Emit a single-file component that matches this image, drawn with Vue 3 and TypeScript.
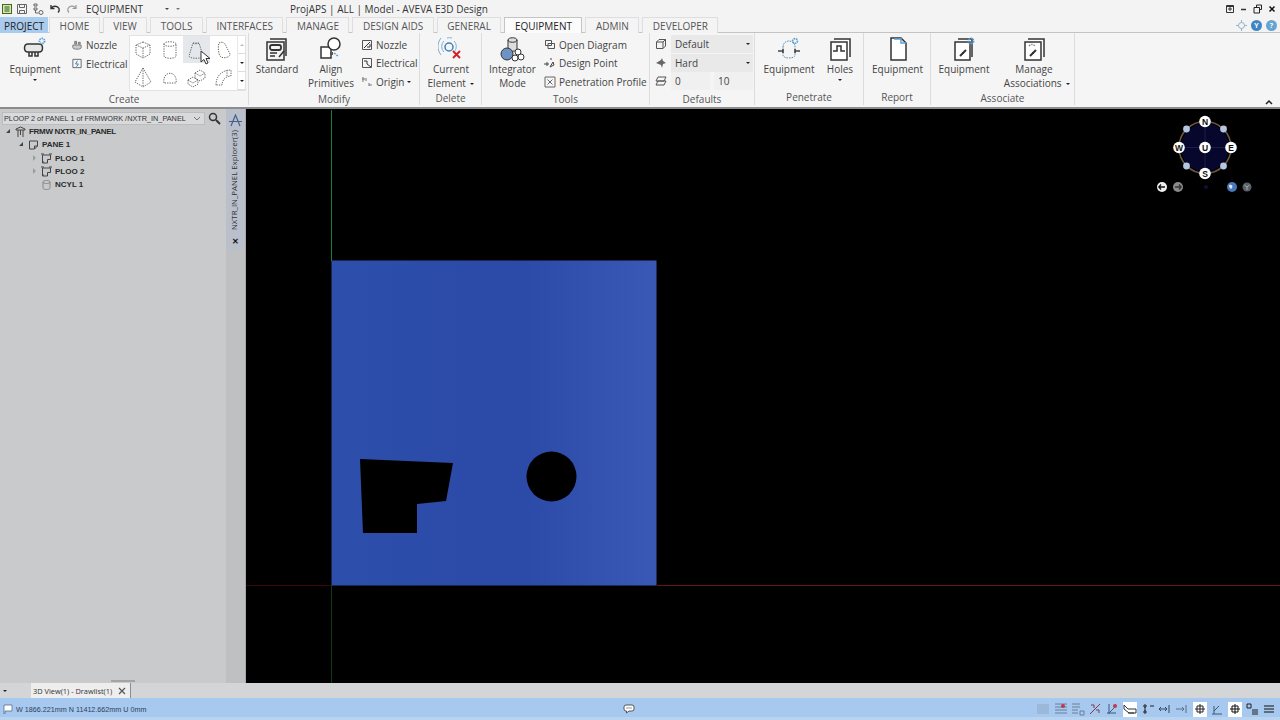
<template>
  <div class="app">
    <!-- title bar -->
    <div class="titlebar">
      <div class="quick">
        <svg width="10" height="10" viewBox="0 0 10 10"><rect x=".5" y=".5" width="9" height="9" fill="#d8e6b0" stroke="#3c6a1e"/><path d="M2.500 3h5M2.500 5h5M2.500 7h5" stroke="#2f5a18"/></svg>
        <svg width="10" height="12" viewBox="0 0 10 12" fill="none" stroke="#666"><path d="M.5 1.500h9v9h-9zM2.500 1.500v3h5v-3M2.500 10.500v-3h5v3"/></svg>
        <svg width="12" height="12" viewBox="0 0 12 12" fill="none" stroke="#666"><path d="M2 1h3v2H2zM2 5h3v2H2zM3.500 7v3h3"/><circle cx="9" cy="9.500" r="2"/></svg>
        <svg width="12" height="12" viewBox="0 0 12 12" fill="none" stroke="#333" stroke-width="1.400"><path d="M2 2v3.500h3.500M2.500 5C4 2.500 8.500 2.500 10 5.500c.6 1.500 0 3-1 4"/></svg>
        <svg width="12" height="12" viewBox="0 0 12 12" fill="none" stroke="#999" stroke-width="1.200"><path d="M10 2v3.500H6.500M9.500 5C8 2.500 3.500 2.500 2 5.500c-.6 1.500 0 3 1 4"/></svg>
        <span class="quick-mod">EQUIPMENT</span>
        <i class="caret quick-caret"></i>
        <i class="caret quick-caret2"></i>
      </div>
      <div class="apptitle">ProjAPS | ALL | Model - AVEVA E3D Design</div>
      <div class="winbtns">
        <svg width="10" height="10" viewBox="0 0 10 10" fill="none" stroke="#333"><path d="M1.500 1.500h7v7h-7zM5 3v4M3 5h4M1.500 2.500h7"/></svg>
        <svg width="8" height="10" viewBox="0 0 8 10"><path d="M1 5.500h5" stroke="#333" stroke-width="1.500"/></svg>
        <svg width="10" height="10" viewBox="0 0 10 10" fill="none" stroke="#222"><path d="M3.500 3V1h5v4.500H6.500M1 3.500h5.500V9H1z"/></svg>
        <svg width="9" height="10" viewBox="0 0 9 10"><path d="M1.500 2.500l5 5M6.500 2.500l-5 5" stroke="#111" stroke-width="1.500"/></svg>
      </div>
    </div>

    <!-- tabs -->
    <div class="tabbar">
      <div class="tabs">
        <div v-for="t in tabs" :key="t" class="tab" :class="{ project: t === 'PROJECT', active: t === 'EQUIPMENT' }">{{ t }}</div>
      </div>
      <div class="help">
        <svg width="11" height="11" viewBox="0 0 11 11" fill="none" stroke="#8fb2c8"><circle cx="5.500" cy="5.500" r="3"/><path d="M5.500 0v2.500M5.500 8.500V11M0 5.500h2.500M8.500 5.500H11"/></svg>
        <span class="help-dot">Y</span>
        <span class="help-dot light">?</span>
      </div>
    </div>

    <!-- ribbon -->
    <div class="ribbon">
      <section class="group" style="width: 249px">
        <div class="group-body">
          <div class="big" style="width: 70px">
            <svg class="big-icon" width="26" height="26" viewBox="0 0 26 26" fill="none" stroke="#333" stroke-width="1.500"><path d="M6 8h11c2.500 0 3.500 2 3.500 4s-1 4-3.500 4H6c-2.500 0-3.500-2-3.500-4S3.500 8 6 8z" fill="#e8e8e8"/><path d="M7 16v4h3v-4M13 16v4h3v-4"/><circle cx="20" cy="5" r="2.600" stroke="#5aa0d8" stroke-width="1.800" stroke-dasharray="1.500 .8"/></svg>
            <span>Equipment</span>
            <i class="caret dark"></i>
          </div>
          <div class="small-col" style="width: 58px">
            <div class="small">
              <svg width="12" height="13" viewBox="0 0 13 13" fill="none" stroke="#777"><path d="M2 6h9v3c0 2-9 2-9 0z" fill="#ccc"/><path d="M4 2h2v3H4zM8 3h2v2H8z" fill="#9ab"/></svg>
              Nozzle
            </div>
            <div class="small">
              <svg width="12" height="13" viewBox="0 0 13 13" fill="none" stroke="#666"><path d="M2 2h9v9H2z"/><path d="M7 3.500L5 7h3l-2 3" stroke="#2d7fb8"/></svg>
              Electrical
            </div>
          </div>
          <div class="gallery">
            <div class="gallery-grid">
              <div v-for="(g, i) in galleryIcons" :key="i" class="cell" :class="{ hot: i === 2 }">
                <svg width="22" height="22" viewBox="0 0 22 22" fill="none" stroke="#666" stroke-dasharray="1.300 1.100"><path :d="g"/></svg>
              </div>
            </div>
            <div class="gallery-scroll">
              <div class="scroll-btn"><i class="caret up"></i></div>
              <div class="scroll-btn"><i class="caret dark"></i></div>
              <div class="scroll-btn"><i class="caret dark bar"></i></div>
            </div>
            <svg class="cursor" width="12" height="16" viewBox="0 0 12 16"><path d="M1 1v11l3-2.500 2 4.500 2-1-2-4.500h4z" fill="#fff" stroke="#333"/></svg>
          </div>
        </div>
        <div class="group-title">Create</div>
      </section>

      <section class="group" style="width: 171px">
        <div class="group-body">
          <div class="big" style="width: 56px">
            <svg class="big-icon" width="26" height="26" viewBox="0 0 26 26" fill="none" stroke="#333" stroke-width="1.500"><path d="M6 3h16v17M3 6h17v18H3z" fill="#f4f4f4"/><rect x="6" y="9" width="11" height="5" rx="2" stroke-width="1.800"/><path d="M6 17h7M6 20h5M20 15l-5 6" stroke-width="1.500"/></svg>
            <span>Standard</span>
          </div>
          <div class="big" style="width: 52px">
            <svg class="big-icon" width="26" height="26" viewBox="0 0 26 26" fill="none" stroke="#333" stroke-width="1.500"><path d="M3 11h10v11H3z" fill="#fff"/><circle cx="16" cy="8" r="6" fill="#fff"/><path d="M16 17l4 3" stroke="#5aa0d8" stroke-dasharray="2 1"/><rect x="12" y="16" width="3" height="3" fill="#555" stroke="none"/></svg>
            <span>Align</span>
            <span>Primitives</span>
          </div>
          <div class="small-col right" style="width: 62px">
            <div class="small">
              <svg width="12" height="12" viewBox="0 0 12 12" fill="none" stroke="#555"><path d="M1.500 1.500h9v9h-9z"/><path d="M3 9l6-6M6 8h3V5" stroke="#333"/></svg>
              Nozzle
            </div>
            <div class="small">
              <svg width="12" height="12" viewBox="0 0 12 12" fill="none" stroke="#555"><path d="M1.500 1.500h9v9h-9z"/><path d="M3 4h3v3M6 7l4 3" stroke="#333"/></svg>
              Electrical
            </div>
            <div class="small">
              <svg width="12" height="12" viewBox="0 0 12 12" fill="none" stroke="#777"><path d="M2 1v5M1 3h3M5 2v3M8 9h3M8 7v3"/></svg>
              Origin <i class="caret dark"></i>
            </div>
          </div>
        </div>
        <div class="group-title">Modify</div>
      </section>

      <section class="group" style="width: 62px">
        <div class="group-body">
          <div class="big" style="width: 62px">
            <svg class="big-icon" width="26" height="26" viewBox="0 0 26 26" fill="none"><circle cx="11" cy="11" r="4" stroke="#3f84b6" stroke-width="1.500"/><path d="M6 16c-3-3-3-8 0-11M16 5c3 3 3 8 0 11M3 19C-1 14-1 7 3 2M9 2c2-.5 3-.5 5 0" stroke="#7cb0d2"/><path d="M15 15l7 7M22 15l-7 7" stroke="#d2232a" stroke-width="2"/></svg>
            <span>Current</span>
            <span>Element <i class="caret dark"></i></span>
          </div>
        </div>
        <div class="group-title">Delete</div>
      </section>

      <section class="group" style="width: 168px">
        <div class="group-body">
          <div class="big" style="width: 61px">
            <svg class="big-icon" width="26" height="26" viewBox="0 0 26 26" fill="none" stroke="#333"><path d="M8 4c0-3 9-3 9 0v9c0 3-9 3-9 0z" fill="#ddd"/><path d="M8 4c0 3 9 3 9 0"/><circle cx="7" cy="18" r="6" fill="#6d93c4"/><circle cx="18" cy="16" r="3" fill="#fff"/><circle cx="21" cy="21" r="3" fill="#fff"/><circle cx="15" cy="22" r="3" fill="#fff"/></svg>
            <span>Integrator</span>
            <span>Mode</span>
          </div>
          <div class="small-col">
            <div class="small">
              <svg width="12" height="12" viewBox="0 0 12 12" fill="none" stroke="#555"><path d="M1.500 1.500h6v5h-6zM4 4.500h6.500v5H4z"/></svg>
              Open Diagram
            </div>
            <div class="small">
              <svg width="12" height="12" viewBox="0 0 12 12" fill="none" stroke="#444"><path d="M0 7h5M3 5v4M7 1v2M9 5l-3 5 4-2z"/></svg>
              Design Point
            </div>
            <div class="small">
              <svg width="12" height="12" viewBox="0 0 12 12" fill="none" stroke="#666"><path d="M1 1h10v10H1zM3.500 3.500l5 5M8.500 3.500l-5 5"/></svg>
              Penetration Profile
            </div>
          </div>
        </div>
        <div class="group-title">Tools</div>
      </section>

      <section class="group" style="width: 105px">
        <div class="group-body defaults">
          <div class="def-row">
            <svg width="12" height="12" viewBox="0 0 12 12" fill="none" stroke="#555"><path d="M1.500 4l2.500-2.500h6.500V8L8 10.500H1.500zM1.500 4H8v6.500M8 4l2.500-2.500"/></svg>
            <div class="combo">Default<i class="caret dark"></i></div>
          </div>
          <div class="def-row">
            <svg width="12" height="12" viewBox="0 0 12 12" fill="#666"><path d="M1 6l5-3 1-2 1 3 3 2-3 1-1 4-1-3z"/></svg>
            <div class="combo">Hard<i class="caret dark"></i></div>
          </div>
          <div class="def-row">
            <svg width="12" height="12" viewBox="0 0 12 12" fill="none" stroke="#555"><path d="M3 2h8L9 6H1zM3 6h8L9 10H1z"/></svg>
            <div class="num">0</div>
            <div class="num">10</div>
          </div>
        </div>
        <div class="group-title">Defaults</div>
      </section>

      <section class="group" style="width: 109px">
        <div class="group-body">
          <div class="big" style="width: 68px">
            <svg class="big-icon" width="26" height="26" viewBox="0 0 26 26" fill="none" stroke="#444"><path d="M7 11c0-8 12-8 12 0v8c0 4-12 4-12 0z" stroke-dasharray="1.500 1" stroke="#5588aa"/><path d="M2 15h5M19 15h5M7 13v4M19 13v4" stroke-width="1.600"/><circle cx="19" cy="5" r="2.400" stroke="#5aa0d8" stroke-width="1.600" stroke-dasharray="1.500 .7"/></svg>
            <span>Equipment</span>
          </div>
          <div class="big" style="width: 34px">
            <svg class="big-icon" width="26" height="26" viewBox="0 0 26 26" fill="none" stroke="#333" stroke-width="1.500"><path d="M7 3h16v18M4 6h16v18H4z" fill="#fff"/><path d="M6 15h4v-5h4v5h4"/></svg>
            <span>Holes</span>
            <i class="caret dark"></i>
          </div>
        </div>
        <div class="group-title">Penetrate</div>
      </section>

      <section class="group" style="width: 67px">
        <div class="group-body">
          <div class="big" style="width: 67px">
            <svg class="big-icon" width="26" height="26" viewBox="0 0 26 26" fill="none" stroke="#333" stroke-width="1.500"><path d="M6 2h10l5 5v17H6z" fill="#fff"/><path d="M9 3h7M16 2v5h5" stroke="#5aa0d8"/></svg>
            <span>Equipment</span>
          </div>
        </div>
        <div class="group-title">Report</div>
      </section>

      <section class="group" style="width: 144px">
        <div class="group-body">
          <div class="big" style="width: 66px">
            <svg class="big-icon" width="26" height="26" viewBox="0 0 26 26" fill="none" stroke="#333" stroke-width="1.500"><path d="M7 3h14v18M4 6h15v18H4z" fill="#fff"/><path d="M9 20l6-6M11 17h2" stroke-width="2"/><circle cx="20" cy="5" r="2.600" stroke="#5aa0d8" stroke-width="1.800" stroke-dasharray="1.500 .8"/></svg>
            <span>Equipment</span>
          </div>
          <div class="big" style="width: 74px">
            <svg class="big-icon" width="26" height="26" viewBox="0 0 26 26" fill="none" stroke="#333" stroke-width="1.500"><path d="M7 3h16v18M4 6h16v18H4z" fill="#fff"/><path d="M9 20l6-6M11 17h2" stroke-width="2"/><path d="M8 10c2-2 4-2 6 0" stroke="#888" stroke-dasharray="1.500 1"/></svg>
            <span>Manage</span>
            <span class="assoc">Associations <i class="caret dark"></i></span>
          </div>
        </div>
        <div class="group-title">Associate</div>
      </section>

      <svg class="collapse" width="8" height="6" viewBox="0 0 8 6" fill="none" stroke="#222" stroke-width="1.500"><path d="M1 5l3-3 3 3"/></svg>
    </div>

    <!-- main -->
    <div class="main">
      <aside class="explorer">
        <div class="explorer-body">
          <div class="search-row">
            <div class="ce-combo">
              <span>PLOOP 2 of PANEL 1 of FRMWORK /NXTR_IN_PANEL</span>
              <svg width="8" height="6" viewBox="0 0 8 6" fill="none" stroke="#777"><path d="M1 1l3 3 3-3"/></svg>
            </div>
            <svg width="13" height="13" viewBox="0 0 13 13" fill="none" stroke="#333" stroke-width="1.500"><circle cx="5" cy="5" r="3.500"/><path d="M8 8l4 4" stroke-width="2"/></svg>
          </div>
          <div class="tree">
            <div v-for="n in treeRows" :key="n.label" class="tree-row" :style="{ paddingLeft: n.indent + 'px' }">
              <i class="expander" :class="n.exp"></i>
              <svg width="11" height="11" viewBox="0 0 11 11" fill="none" :stroke="n.kind === 'cyl' ? '#888' : '#444'"><path :d="treeIcons[n.kind]"/></svg>
              <span>{{ n.label }}</span>
            </div>
          </div>
          <div class="split-grip"></div>
        </div>
        <div class="dockstrip">
          <div class="docktab">
            <svg width="13" height="13" viewBox="0 0 13 13" fill="none" stroke="#44618e" stroke-width="1.200"><path d="M2 12L6.500 1 11 12M0 7.500h13"/></svg>
            <span class="dock-label">NXTR_IN_PANEL Explorer(3)</span>
            <span class="dock-x">✕</span>
          </div>
        </div>
      </aside>
      <div class="viewport">
        <svg class="scene" width="1034" height="575" viewBox="0 0 1034 575">
          <defs>
            <linearGradient id="plate" x1="0" y1="0" x2="1" y2="0">
              <stop offset="0" stop-color="#2d4eab"/>
              <stop offset=".6" stop-color="#2c4aa8"/>
              <stop offset="1" stop-color="#3a58b6"/>
            </linearGradient>
          </defs>
          <path d="M85.500 0V151" stroke="#1f7a2f"/>
          <path d="M85.500 475V575" stroke="#123a12"/>
          <path d="M0 475.500H85" stroke="#3a0808"/>
          <path d="M411 475.500H1034" stroke="#6a1414"/>
          <rect x="85.500" y="150.500" width="325" height="325" fill="url(#plate)"/>
          <path d="M114 349L207 353 200 391 171 394V423H117z" fill="#000"/>
          <circle cx="305.500" cy="366.500" r="25" fill="#000"/>

          <g transform="translate(959 37.500)">
            <circle r="26" fill="none" stroke="#6b5a42" stroke-width="1.500"/>
            <circle r="24" fill="#07072e"/>
            <path d="M-24 0H24M0-24V24" stroke="#1c1c44"/>
            <circle v-for="d in compassDots" :key="d[0] * 2 + d[1]" :cx="d[0]" :cy="d[1]" r="3.400" fill="#b6c6e0"/>
            <g v-for="c in compass" :key="c.t" :transform="`translate(${c.x} ${c.y})`">
              <circle r="5.800" fill="#fff"/>
              <text y="3" text-anchor="middle" class="compass-text">{{ c.t }}</text>
            </g>
          </g>
          <g transform="translate(916 77)">
            <circle r="5" fill="#f0f0f0"/>
            <path d="M3 0H-3M-1-2.500L-3.200 0-1 2.500" fill="none" stroke="#111" stroke-width="1.300"/>
            <circle cx="16" r="5" fill="#8a8a8a"/>
            <path d="M13 0h6M17-2.500L19.200 0 17 2.500" fill="none" stroke="#333" stroke-width="1.300"/>
            <circle cx="44" r="2" fill="#101038"/>
            <circle cx="70" r="5" fill="#4a78b8"/>
            <path d="M67-2c3-1 4 1 3 3s-3 0-3-3" fill="#dfe8f4"/>
            <circle cx="85" r="4.500" fill="#5a6068"/>
            <path d="M82.500-2L85 0 87.500-2M85 0V3" fill="none" stroke="#a4a8ae"/>
          </g>
        </svg>
      </div>
    </div>

    <!-- doc tab strip -->
    <div class="docstrip">
      <i class="caret dark doc-caret"></i>
      <div class="doctab">
        <span>3D View(1) - Drawlist(1)</span>
        <svg width="8" height="8" viewBox="0 0 8 8"><path d="M1 1l6 6M7 1L1 7" stroke="#555" stroke-width="1.200"/></svg>
      </div>
    </div>

    <!-- status bar -->
    <footer class="status">
      <div class="coords">
        <svg width="10" height="10" viewBox="0 0 10 10"><path d="M1 1h8v6H2v3H1z" fill="#fff" stroke="#44607e" stroke-width=".7"/></svg>
        <span>W 1866.221mm N 11412.662mm U 0mm</span>
      </div>
      <svg class="chat" width="12" height="10" viewBox="0 0 12 10"><path d="M3 1h6a2 2 0 012 2v2a2 2 0 01-2 2H6L3.500 9V7H3a2 2 0 01-2-2V3a2 2 0 012-2z" fill="#fff" stroke="#333" stroke-width=".8"/><path d="M3.500 4h1M5.500 4h1M7.500 4h1" stroke="#333"/></svg>
      <div class="status-icons">
        <div v-for="(s, i) in statusIcons" :key="i" class="sicon" :class="{ on: s.on }">
          <svg width="14" height="14" viewBox="0 0 14 14" fill="none" :stroke="s.c"><path :d="s.d"/><circle v-if="s.dot" cx="9" cy="4" r="2" fill="#c0394a" stroke="none"/></svg>
        </div>
      </div>
    </footer>
  </div>
</template>

<script setup lang="ts">
const tabs = ['PROJECT', 'HOME', 'VIEW', 'TOOLS', 'INTERFACES', 'MANAGE', 'DESIGN AIDS', 'GENERAL', 'EQUIPMENT', 'ADMIN', 'DEVELOPER']

const galleryIcons = [
  'M11 3l7 3v9l-7 4-7-4V6zM4 6l7 3 7-3M11 9v10',
  'M5 5c0-3 12-3 12 0v12c0 3-12 3-12 0zM5 5c0 3 12 3 12 0',
  'M8 4h6l4 13c0 3-14 3-14 0zM8 4c0 1 6 1 6 0',
  'M7 4c3-2 6 0 7 3l4 8c0 4-8 5-10 2-2-4-2-10-1-13z',
  'M11 2l8 14-8 5-8-5zM11 2v19',
  'M5 17c-2-13 14-13 12 0z',
  'M10 7l5-3 5 3-5 3zM10 7v5l5 3 5-3V7M3 14l5-3 5 3-5 3zM3 14v4l5 3 5-3v-4',
  'M4 19c0-9 6-15 15-15v6c-5 0-9 4-9 9zM15 4v6',
]

type Kind = 'site' | 'pane' | 'loop' | 'cyl'
const treeIcons: Record<Kind, string> = {
  site: 'M5.500 1L1 3v1h9V3zM3 4v7M8 4v7M5.500 4v5',
  pane: 'M1.500 2h8v5l-3 3h-5zM6.500 10V7h3',
  loop: 'M1.500 2h8v4.500h-3V10h-5zM0 1h3M8 1h3M1 9h2',
  cyl: 'M2 3c0-2 7-2 7 0v6c0 2-7 2-7 0zM2 3c0 2 7 2 7 0',
}

const treeRows: { label: string; indent: number; exp: string; kind: Kind }[] = [
  { label: 'FRMW NXTR_IN_PANEL', indent: 6, exp: 'open', kind: 'site' },
  { label: 'PANE 1', indent: 19, exp: 'open', kind: 'pane' },
  { label: 'PLOO 1', indent: 32, exp: 'closed', kind: 'loop' },
  { label: 'PLOO 2', indent: 32, exp: 'closed', kind: 'loop' },
  { label: 'NCYL 1', indent: 32, exp: '', kind: 'cyl' },
]

const compass = [
  { t: 'N', x: 0, y: -26 },
  { t: 'W', x: -26, y: 0 },
  { t: 'U', x: 0, y: 0 },
  { t: 'E', x: 26, y: 0 },
  { t: 'S', x: 0, y: 26 },
]
const compassDots = [[-18.500, -18.500], [18.500, -18.500], [-18.500, 18.500], [18.500, 18.500]]

const statusIcons = [
  { d: 'M1 3h12M1 5h12M1 7h12M1 9h12M1 11h12', c: '#8fa8c4' },
  { d: 'M1 2h12M1 5h12M1 8h12M1 11h12', c: '#6a7f98', dot: true },
  { d: 'M1 2h8M1 5h8M1 8h6M1 11h6M9 9h4v4H9z', c: '#6a7f98' },
  { d: 'M2 12L12 2M3 3h3v3M8 8h3v3', c: '#7a3a4a' },
  { d: 'M3 12V2M1 11h9M3 11l6-6', c: '#3d5a78', dot: true },
  { d: 'M1 3l4 4h8v4H6L1 7zM5 11h6', c: '#333', on: true },
  { d: 'M3 3h2v2H3zM3 9h2v2H3zM4 5v4M9 4h4', c: '#222' },
  { d: 'M1 7h8M3 5L1 7l2 2M7 5l2 2-2 2M11 3v8', c: '#33465c' },
  { d: 'M1 7h8M7 5l2 2-2 2M11 3v8', c: '#5a7088' },
  { d: 'M7 2v10M2 7h10M4 4h6v6H4z', c: '#222', on: true },
  { d: 'M2 12h10M4 12V4M4 9l5-5', c: '#3d5a78' },
  { d: 'M7 2v10M2 7h10M4 4h6v6H4z', c: '#111', on: true },
  { d: 'M2 2h4v4H2zM7 8h6M7 10h6M7 12h6', c: '#222' },
  { d: 'M2 4h10M2 7h10M2 10h10', c: '#111' },
]
</script>

<style scoped>
.app {
  width: 1280px;
  height: 720px;
  display: flex;
  flex-direction: column;
  overflow: hidden;
  background: #f3f3f3;
  font-family: "Open Sans", "Liberation Sans", sans-serif;
  font-size: 10px;
  color: #444;
}

.caret {
  display: inline-block;
  width: 0;
  height: 0;
  border-left: 2px solid transparent;
  border-right: 2px solid transparent;
  border-top: 2px solid #444;
}
.caret.dark { border-top-color: #222; }
.caret.up { border-top: 0; border-bottom: 2px solid #bbb; }
.caret.bar { box-shadow: 0 -3px 0 -1px #222; }

/* title bar */
.titlebar {
  height: 17px;
  display: flex;
  align-items: center;
  position: relative;
  flex: none;
}
.quick {
  display: flex;
  align-items: center;
  gap: 5px;
  padding-left: 2px;
}
.quick-mod {
  margin-left: 3px;
  width: 74px;
  color: #333;
}
.quick-caret2 { margin-left: 2px; border-top-color: #777; }
.apptitle {
  margin-left: 110px;
  color: #333;
}
.winbtns {
  margin-left: auto;
  margin-right: 3px;
  display: flex;
  gap: 5px;
  align-items: center;
}

/* tabs */
.tabbar {
  height: 16px;
  flex: none;
  display: flex;
  justify-content: space-between;
  border-bottom: 1px solid #c4c4c4;
  box-sizing: border-box;
}
.tabs { display: flex; }
.tab {
  height: 16px;
  padding: 0 9.500px;
  margin-right: 3px;
  line-height: 16px;
  color: #555;
  background: #f4f4f4;
  border: 1px solid #dedede;
  border-bottom: 0;
  box-sizing: border-box;
}
.tab.project {
  background: #a9cbee;
  border-color: #a9cbee;
  color: #222;
  padding: 0 3px;
  margin-right: 1px;
}
.tab.active {
  background: #fbfbfb;
  color: #222;
  border-color: #c4c4c4;
  height: 17px;
  position: relative;
}
.help {
  display: flex;
  align-items: center;
  gap: 4px;
  padding: 2px 3px 0 0;
}
.help-dot {
  width: 11px;
  height: 11px;
  border-radius: 50%;
  background: #3f86c6;
  color: #fff;
  font-size: 7px;
  font-weight: 700;
  line-height: 11px;
  text-align: center;
}
.help-dot.light { background: #66a4d2; }

/* ribbon */
.ribbon {
  height: 76px;
  flex: none;
  display: flex;
  position: relative;
  background: #f5f5f5;
  border-bottom: 2px solid #8c8c8c;
  box-sizing: border-box;
}
.group {
  display: flex;
  flex-direction: column;
  flex: none;
  box-sizing: border-box;
  border-right: 1px solid #dcdcdc;
  margin-bottom: 2px;
}
.group-body {
  height: 58px;
  display: flex;
  padding-top: 3px;
  box-sizing: border-box;
}
.group-title {
  height: 16px;
  line-height: 16px;
  text-align: center;
  color: #555;
}
.big {
  flex: none;
  display: flex;
  flex-direction: column;
  align-items: center;
  line-height: 14px;
  color: #444;
  white-space: nowrap;
}
.big .caret { margin-top: 3px; }
.assoc { margin-left: 6px; }
.assoc .caret { margin-left: 6px; vertical-align: 2px; }
.big span .caret { vertical-align: 2px; margin-top: 0; margin-left: 2px; }
.small-col {
  display: flex;
  flex-direction: column;
  padding-left: 1px;
}
.small-col.right { padding-left: 4px; box-sizing: border-box; }
.small {
  height: 18.500px;
  display: flex;
  align-items: center;
  gap: 3px;
  white-space: nowrap;
  color: #444;
}
.small svg { flex: none; }
.gallery {
  width: 117px;
  height: 56px;
  margin-top: -1px;
  display: flex;
  position: relative;
  background: #fff;
  border: 1px solid #e2e2e2;
  box-sizing: border-box;
}
.gallery-grid {
  width: 107px;
  display: grid;
  grid-template-columns: repeat(4, 26.500px);
  grid-template-rows: repeat(2, 27px);
}
.cell {
  display: flex;
  align-items: center;
  justify-content: center;
}
.cell.hot { background: #e4e8ec; }
.gallery-scroll {
  flex: 1;
  display: flex;
  flex-direction: column;
  border-left: 1px solid #e8e8e8;
}
.scroll-btn {
  flex: 1;
  display: flex;
  align-items: center;
  justify-content: center;
  border-bottom: 1px solid #ddd;
}
.cursor {
  position: absolute;
  left: 70px;
  top: 14px;
}
.defaults {
  flex-direction: column;
  padding: 2px 0 0 5px;
}
.def-row {
  height: 18.500px;
  display: flex;
  align-items: center;
  gap: 3px;
}
.def-row svg { flex: none; margin-right: 1px; }
.combo {
  width: 82px;
  height: 18px;
  display: flex;
  align-items: center;
  justify-content: space-between;
  padding: 0 3px 0 4px;
  background: #e9e9e9;
  box-sizing: border-box;
  color: #444;
}
.num {
  width: 39px;
  height: 18px;
  line-height: 18px;
  padding-left: 4px;
  background: #f0f0f0;
  box-sizing: border-box;
}
.def-row .num + .num { margin-left: 1px; }
.collapse {
  position: absolute;
  right: 7px;
  bottom: 2px;
}

/* main */
.main {
  flex: 1;
  min-height: 0;
  display: flex;
  background: #000;
}
.explorer {
  width: 246px;
  flex: none;
  display: flex;
  background: #c9cacb;
}
.explorer-body {
  width: 226px;
  position: relative;
  flex: none;
}
.search-row {
  display: flex;
  align-items: center;
  gap: 3px;
  height: 15px;
  padding: 2px 0 0 2px;
  box-sizing: content-box;
}
.ce-combo {
  width: 203px;
  height: 13px;
  flex: none;
  display: flex;
  align-items: center;
  justify-content: space-between;
  padding: 0 3px 0 1px;
  background: #d9dadb;
  border: 1px solid #bdbdbd;
  box-sizing: border-box;
  font-family: "Liberation Sans", sans-serif;
  font-size: 7.300px;
  color: #333;
  white-space: nowrap;
}
.tree { margin-top: -1px; }
.tree-row {
  height: 13.300px;
  display: flex;
  align-items: center;
  font-family: "Liberation Sans", sans-serif;
  font-size: 8px;
  font-weight: 700;
  color: #2a2a2a;
  white-space: nowrap;
}
.tree-row:first-child span { letter-spacing: -.3px; }
.tree-row svg { margin-right: 3px; flex: none; }
.expander {
  width: 7px;
  flex: none;
  margin-right: 2px;
  height: 7px;
  position: relative;
}
.expander.open::before {
  content: "";
  position: absolute;
  left: 0;
  top: 1px;
  border-left: 4px solid transparent;
  border-bottom: 4px solid #444;
}
.expander.closed::before {
  content: "";
  position: absolute;
  left: 1px;
  top: 0;
  border-left: 3px solid #9c9c9c;
  border-top: 3px solid transparent;
  border-bottom: 3px solid transparent;
}
.split-grip {
  position: absolute;
  left: 111px;
  bottom: 1px;
  width: 24px;
  height: 2px;
  background: #a4a4a4;
}
.dockstrip {
  width: 20px;
  flex: none;
  background: #bfc0c2;
  border-right: 1px solid #a8a8a8;
  box-sizing: border-box;
}
.docktab {
  width: 19px;
  height: 141px;
  display: flex;
  flex-direction: column;
  align-items: center;
  padding-top: 5px;
  box-sizing: border-box;
  background: #b9bfcb;
}
.dock-label {
  writing-mode: vertical-rl;
  transform: rotate(180deg);
  margin: 6px 4px 0 0;
  height: 97px;
  font-size: 7.800px;
  white-space: nowrap;
  color: #333;
}
.dock-x {
  margin-top: 5px;
  font-size: 8px;
  font-weight: 700;
  color: #111;
}
.viewport {
  flex: 1;
  min-width: 0;
  padding-top: 1px;
  overflow: hidden;
}
.scene { display: block; }
.compass-text {
  font-family: "Liberation Sans", sans-serif;
  font-size: 8.500px;
  font-weight: 700;
  fill: #111;
}

/* doc strip and status */
.docstrip {
  height: 15px;
  flex: none;
  display: flex;
  align-items: center;
  background: #d4d5d6;
}
.doc-caret { margin-left: 3px; }
.doctab {
  margin-left: 24px;
  width: 100px;
  height: 15px;
  display: flex;
  align-items: center;
  justify-content: space-between;
  padding: 0 4px 0 2px;
  background: #eeeeee;
  border-right: 1px solid #8d8d8d;
  box-sizing: border-box;
  font-size: 7.400px;
  color: #333;
  white-space: nowrap;
}
.status {
  height: 22px;
  flex: none;
  display: flex;
  align-items: center;
  position: relative;
  background: #a7c9ef;
  border-bottom: 3px solid #b9d4f1;
  padding-top: 3px;
  box-sizing: border-box;
}
.coords {
  display: flex;
  align-items: center;
  gap: 3px;
  padding-left: 3px;
  font-family: "Liberation Sans", sans-serif;
  font-size: 7.200px;
  color: #2c3f58;
}
.chat {
  position: absolute;
  left: 623px;
  top: 6px;
}
.status-icons {
  margin-left: auto;
  margin-right: 2px;
  display: flex;
}
.sicon {
  width: 17.400px;
  height: 15px;
  display: flex;
  align-items: center;
  justify-content: center;
}
.sicon.on { background: #fff; width: 14px; margin: 0 1.700px; }
</style>
